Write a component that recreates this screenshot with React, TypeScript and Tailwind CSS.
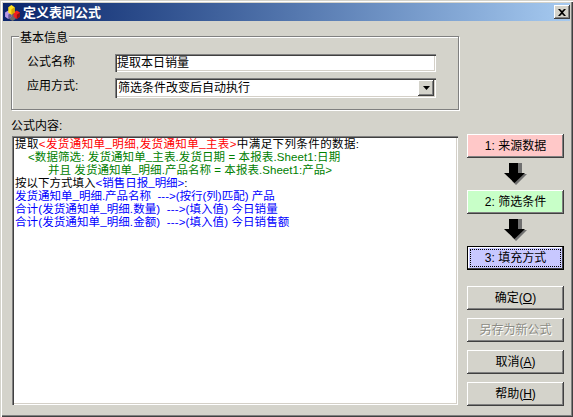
const raised = 'shadow-[inset_-1px_-1px_#404040,inset_1px_1px_#ffffff,inset_-2px_-2px_#808080]'
const sunken = 'shadow-[inset_1px_1px_#808080,inset_2px_2px_#404040,inset_-1px_-1px_#ffffff,inset_-2px_-2px_#d4d0c8]'

function DownArrow() {
    return (
        <svg width="23" height="22" viewBox="0 0 23 22" className="block">
            <path d="M6 0h12v11h5L12 22 8 18z" fill="#707070" />
            <path d="M5 0h9v10h7L10.500 20 0 10h5z" fill="#000000" />
        </svg>
    )
}

function Btn({ label, bg = 'bg-[#d4d3cb]', disabled }: { label: React.ReactNode; bg?: string; disabled?: boolean }) {
    return (
        <div className={`h-6 w-[97px] flex items-center justify-center ${raised} ${bg} ${disabled ? 'text-[#8c8c84] [text-shadow:1px_1px_#ffffff]' : 'text-black'}`}>
            {label}
        </div>
    )
}

function Key({ k }: { k: string }) {
    return <span>(<span className="underline">{k}</span>)</span>
}

// underscore sits a bit higher here, as in the bitmap font of the original
function Us() {
    return <span className="relative -top-[1px]">_</span>
}

export default function App() {
    return (
        <div className="w-[573px] h-[417px] overflow-hidden bg-[#d4d3cb] text-[12px] leading-[13px] text-black font-['Liberation_Sans','Noto_Sans_CJK_SC',sans-serif] p-[3px] shadow-[inset_1px_1px_#d4d3cb,inset_2px_2px_#ffffff,inset_-1px_-1px_#404040,inset_-2px_-2px_#808080]">
            <div className="h-[18px] flex items-center bg-gradient-to-r from-[#0a246a] to-[#a6caf0]">
                <svg width="17" height="17" viewBox="0 0 16 16" className="ml-[1px] shrink-0">
                    <path d="M5 11l3-2 3 2v3l-3 2-3-2z" fill="#6b6b6b" />
                    <path d="M1 8l3-2 3 2v4l-3 2-3-2z" fill="#b79be8" />
                    <path d="M4 10l3-2v4l-3 2z" fill="#6a5a9a" />
                    <path d="M9 8l3-2 3 2v4l-3 2-3-2z" fill="#f02020" />
                    <path d="M12 10l3-2v4l-3 2z" fill="#901010" />
                    <path d="M4 3l3-2 3 2v5l-3 2-3-2z" fill="#ffe020" />
                    <path d="M7 5l3-2v5l-3 2z" fill="#d8a800" />
                </svg>
                <span className="ml-[2px] text-[13px] text-white font-bold">定义表间公式</span>
                <div className={`ml-auto w-4 h-[14px] flex items-center justify-center bg-[#d4d3cb] ${raised}`}>
                    <svg width="8" height="7" viewBox="0 0 8 7">
                        <path d="M0 0h2l2 2 2-2h2L5 3.500 8 7H6L4 5 2 7H0l3-3.500z" fill="#000000" />
                    </svg>
                </div>
            </div>

            <div className="relative mt-[15px] ml-2 w-[448px] h-[74px] border border-[#808080] shadow-[inset_1px_1px_#ffffff,1px_1px_#ffffff] pl-[15px] pt-[17px]">
                <span className="absolute -top-[5px] left-[7px] bg-[#d4d3cb] px-[1px]">基本信息</span>
                <div className="flex gap-[40px] h-[18px]">
                    <span className="w-[48px] whitespace-nowrap pt-[2px]">公式名称</span>
                    <div className={`w-[321px] h-[18px] bg-white flex items-center pl-[2px] pt-[1px] ${sunken}`}>提取本日销量</div>
                </div>
                <div className="flex gap-[40px] h-5 mt-[6px]">
                    <span className="w-[48px] whitespace-nowrap pt-[2px]">应用方式:</span>
                    <div className={`w-[321px] h-5 bg-white flex items-center pl-[3px] pr-[2px] ${sunken}`}>
                        <span className="pt-[1px]">筛选条件改变后自动执行</span>
                        <div className={`ml-auto w-4 h-4 bg-[#d4d3cb] flex items-center justify-center ${raised}`}>
                            <svg width="7" height="4" viewBox="0 0 7 4"><path d="M0 0h7L3.500 4z" fill="#000000" /></svg>
                        </div>
                    </div>
                </div>
            </div>

            <div className="flex mt-[7px]">
                <div className="ml-2 w-[448px]">
                    <div className="h-[14px] mt-[3px]">公式内容:</div>
                    <div className={`mt-[2px] ml-[1px] h-[269px] w-[446px] bg-white pl-[3px] pt-[2px] text-[11.5px] whitespace-pre ${sunken}`}>
                        <div className="tracking-[0.4px]">提取<span className="text-[#ff0000]">&lt;发货通知单<Us />明细,发货通知单<Us />主表&gt;</span>中满足下列条件的数据:</div>
                        <div className="text-[#008000] pl-[13px] tracking-[0.1px]">&lt;数据筛选: 发货通知单<Us />主表.发货日期 = 本报表.Sheet1:日期</div>
                        <div className="text-[#008000] pl-[33px] tracking-[0.05px]">并且 发货通知单<Us />明细.产品名称 = 本报表.Sheet1:产品&gt;</div>
                        <div>按以下方式填入<span className="text-[#0000ff]">&lt;销售日报<Us />明细&gt;</span>:</div>
                        <div className="text-[#0000ff]">发货通知单<Us />明细.产品名称  ---&gt;(按行(列)匹配) 产品</div>
                        <div className="text-[#0000ff] tracking-[0.1px]">合计(发货通知单<Us />明细.数量)  ---&gt;(填入值) 今日销量</div>
                        <div className="text-[#0000ff] tracking-[0.1px]">合计(发货通知单<Us />明细.金额)  ---&gt;(填入值) 今日销售额</div>
                    </div>
                </div>
                <div className="ml-2 pt-[17px] flex flex-col items-center">
                    <Btn label="1: 来源数据" bg="bg-[#ffc8c8]" />
                    <div className="h-8 flex items-center justify-center"><DownArrow /></div>
                    <Btn label="2: 筛选条件" bg="bg-[#c8ffc8]" />
                    <div className="h-8 flex items-center justify-center"><DownArrow /></div>
                    <div className="h-6 w-[97px] border border-black bg-[#c8c8ff] flex items-center justify-center p-[2px] shadow-[inset_-1px_-1px_#404040,inset_1px_1px_#ffffff]">
                        <div className="w-full h-full flex items-center justify-center border border-dotted border-black">3: 填充方式</div>
                    </div>
                    <div className="h-4" />
                    <div className="flex flex-col gap-2">
                        <Btn label={<>确定<Key k="O" /></>} />
                        <Btn label="另存为新公式" disabled />
                        <Btn label={<>取消<Key k="A" /></>} />
                        <Btn label={<>帮助<Key k="H" /></>} />
                    </div>
                </div>
            </div>
        </div>
    )
}
